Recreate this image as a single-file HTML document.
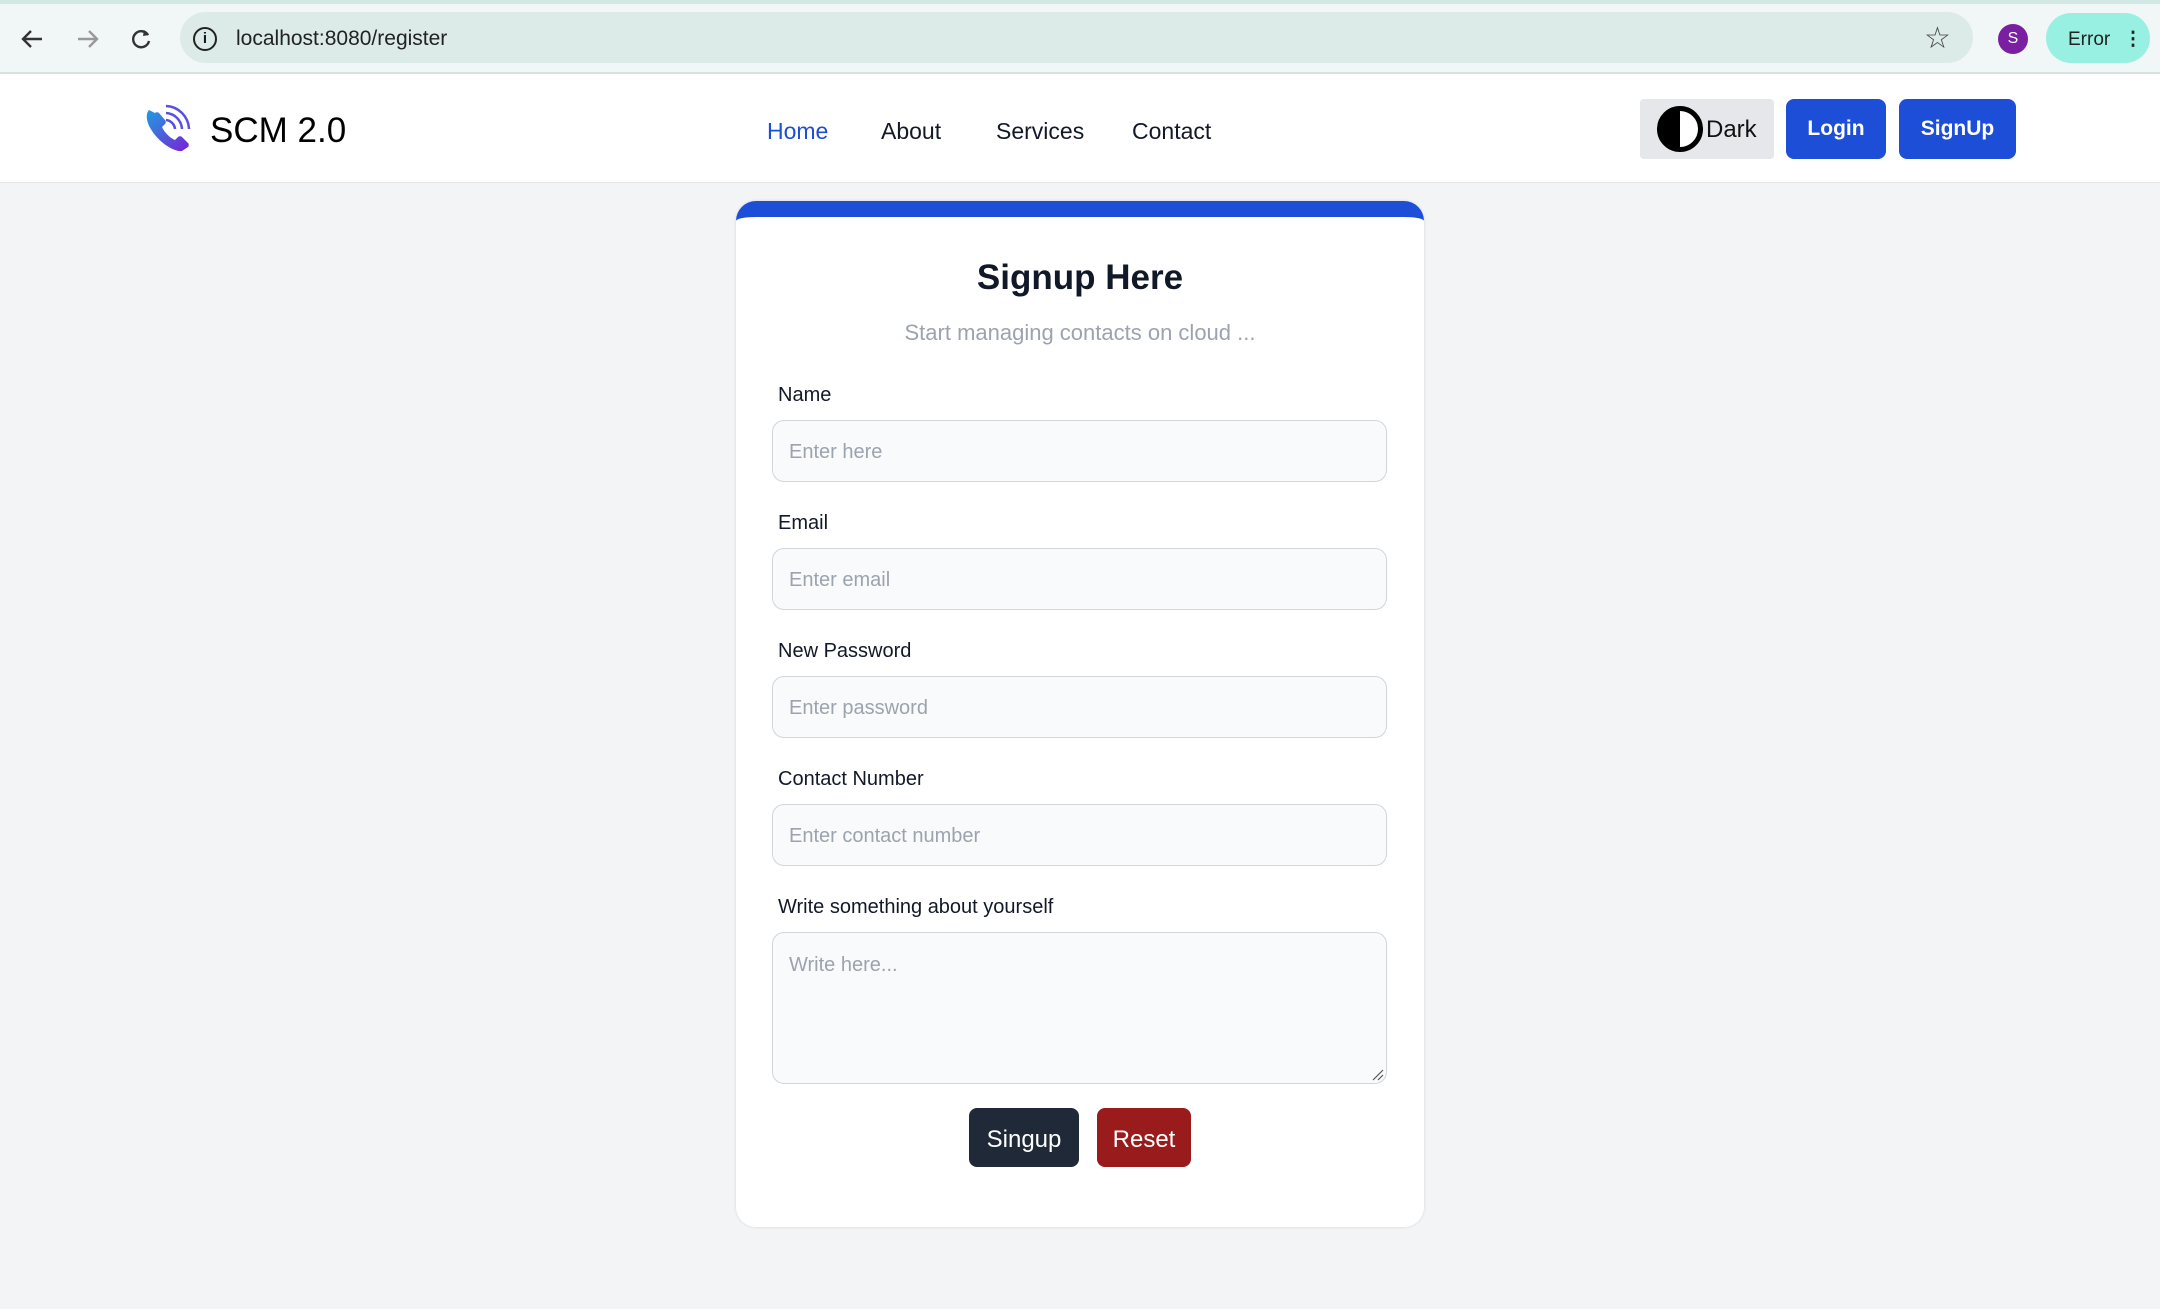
<!DOCTYPE html>
<html><head><meta charset="utf-8"><style>
*{box-sizing:border-box;margin:0;padding:0}
body{width:2160px;height:1309px;background:#f3f4f6;font-family:"Liberation Sans",sans-serif;position:relative;overflow:hidden;color:#111827}
.abs{position:absolute}
#chrome{left:0;top:0;width:2160px;height:74px;background:#f1f7f6;border-bottom:2px solid #d6e2e0}
#tabline{left:0;top:0;width:2160px;height:4px;background:#d3e8e4}
#url{left:180px;top:12px;width:1793px;height:51px;border-radius:26px;background:#dcebe8}
#nav{left:0;top:74px;width:2160px;height:109px;background:#fff;border-bottom:1px solid #e5e7eb}
.lnk{top:118px;font-size:23px;color:#111827}
.btn{border-radius:8px;color:#fff;font-weight:bold;font-size:21px;display:flex;align-items:center;justify-content:center}
#card{left:736px;top:201px;width:688px;height:1026px;background:#fff;border-radius:20px;border-top:16px solid #1d4ed8;box-shadow:0 0 3px rgba(0,0,0,.12)}
.lbl{left:778px;font-size:20px;font-weight:500;color:#111827}
.inp{left:772px;width:615px;height:62px;background:#f9fafb;border:1.5px solid #d1d5db;border-radius:12px;color:#9ca3af;font-size:20px;padding:20px 0 0 16px}
</style></head><body>
<div id="chrome" class="abs"></div>
<div id="tabline" class="abs"></div>
<div id="url" class="abs"></div>
<svg class="abs" style="left:20px;top:26px" width="140" height="26" viewBox="0 0 140 26">
<path d="M22 13H4M11 5L3 13l8 8" stroke="#333" stroke-width="2.4" fill="none"/>
<path d="M58 13h18M69 5l8 8-8 8" stroke="#999" stroke-width="2.4" fill="none"/>
<path d="M128 9a8 8 0 1 0 1 6" stroke="#333" stroke-width="2.4" fill="none"/><path d="M124 4l5 5-6 1z" fill="#333"/>
</svg>
<div class="abs" style="left:193px;top:27px;width:24px;height:24px;border:2px solid #222;border-radius:50%;font-size:15px;text-align:center;line-height:20px;font-weight:bold">i</div>
<div class="abs" style="left:236px;top:27px;font-size:21px;color:#222">localhost:8080/register</div>
<div class="abs" style="left:1924px;top:21px;font-size:30px;color:#444">☆</div>
<div class="abs" style="left:1998px;top:24px;width:30px;height:30px;border-radius:50%;background:#7b1fa2;color:#fff;font-size:16px;text-align:center;line-height:30px">S</div>
<div class="abs" style="left:2046px;top:13px;width:104px;height:50px;border-radius:25px;background:#98f0e3;font-size:19px;color:#222;padding:15px 0 0 22px">Error <b style="margin-left:8px">⋮</b></div>

<div id="nav" class="abs"></div>
<svg class="abs" style="left:144px;top:104px" width="50" height="50" viewBox="0 0 50 50">
<defs><linearGradient id="g" x1="0" y1="0" x2="1" y2="1"><stop offset="0" stop-color="#1e9de0"/><stop offset="1" stop-color="#7c1fd6"/></linearGradient></defs>
<path d="M5 6c-4 4-3 14 6 25s21 17 27 16l6-4c1-1 1-3 0-4l-6-6c-1-1-3-1-4 0l-3 3c-5-2-11-8-13-13l3-3c1-1 1-3 0-4l-6-7c-1-1-3-1-4 0z" fill="url(#g)"/>
<path d="M22 16a10 10 0 0 1 9 9M22 9a17 17 0 0 1 16 16M22 2a24 24 0 0 1 23 23" stroke="#5a4fe0" stroke-width="2.5" fill="none"/>
</svg>
<div class="abs" style="left:210px;top:111px;font-size:35px;color:#000">SCM 2.0</div>
<div class="abs lnk" style="left:767px;color:#1d4ed8">Home</div>
<div class="abs lnk" style="left:881px">About</div>
<div class="abs lnk" style="left:996px">Services</div>
<div class="abs lnk" style="left:1132px">Contact</div>
<div class="abs" style="left:1640px;top:99px;width:134px;height:60px;background:#e5e7eb;border-radius:4px"></div>
<div class="abs" style="left:1657px;top:106px;width:46px;height:46px;border-radius:50%;border:5px solid #000;background:linear-gradient(90deg,#000 50%,#fff 50%)"></div>
<div class="abs" style="left:1706px;top:116px;font-size:24px;color:#111">Dark</div>
<div class="abs btn" style="left:1786px;top:99px;width:100px;height:60px;background:#1d4ed8">Login</div>
<div class="abs btn" style="left:1899px;top:99px;width:117px;height:60px;background:#1d4ed8">SignUp</div>

<div id="card" class="abs"></div>
<div class="abs" style="left:736px;width:688px;top:258px;text-align:center;font-size:35px;font-weight:bold;color:#111827">Signup Here</div>
<div class="abs" style="left:736px;width:688px;top:320px;text-align:center;font-size:22px;color:#9ca3af">Start managing contacts on cloud ...</div>
<div class="abs lbl" style="top:384px">Name</div>
<div class="abs inp" style="top:420px">Enter here</div>
<div class="abs lbl" style="top:512px">Email</div>
<div class="abs inp" style="top:548px">Enter email</div>
<div class="abs lbl" style="top:640px">New Password</div>
<div class="abs inp" style="top:676px">Enter password</div>
<div class="abs lbl" style="top:768px">Contact Number</div>
<div class="abs inp" style="top:804px">Enter contact number</div>
<div class="abs lbl" style="top:896px">Write something about yourself</div>
<div class="abs inp" style="top:932px;height:152px;padding-top:21px">Write here...</div>
<svg class="abs" style="left:1372px;top:1069px" width="12" height="12"><path d="M1 11L11 1M6 11l5-5" stroke="#555" stroke-width="1.2"/></svg>
<div class="abs btn" style="left:969px;top:1108px;width:110px;height:59px;background:#1f2937;font-weight:normal;font-size:24px;padding-top:4px">Singup</div>
<div class="abs btn" style="left:1097px;top:1108px;width:94px;height:59px;background:#991b1b;font-weight:normal;font-size:24px;padding-top:4px">Reset</div>
</body></html>
